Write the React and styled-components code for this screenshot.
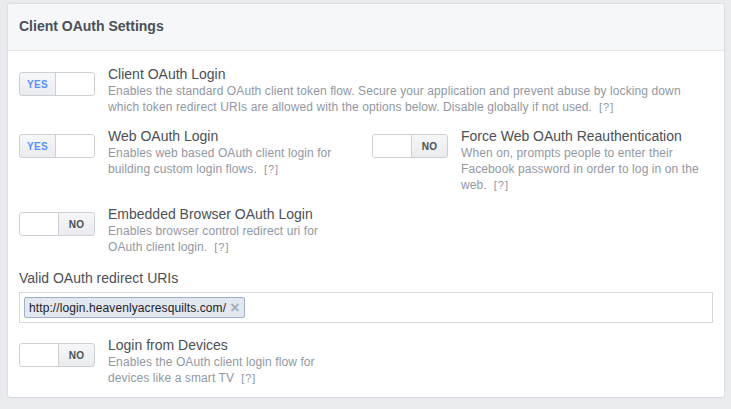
import React from "react";
import styled, { createGlobalStyle } from "styled-components";

const GlobalStyle = createGlobalStyle`
  html, body {
    margin: 0;
    background: #e9ebee;
  }
  body {
    padding: 3px 6px 0 7px;
    font-family: "Liberation Sans", Arial, Helvetica, sans-serif;
  }
`;

const Card = styled.section`
  background: #fff;
  border: 1px solid #dddfe2;
  border-bottom-color: #d3d6db;
  border-radius: 3px;
`;

const Header = styled.header`
  background: #f6f7f9;
  border-bottom: 1px solid #e5e5e5;
  border-radius: 3px 3px 0 0;
  padding: 13px 11px 15px;
`;

const Title = styled.h2`
  margin: 0;
  font-size: 14px;
  line-height: 18px;
  font-weight: bold;
  color: #4b4f56;
`;

const Body = styled.div`
  display: grid;
  grid-template-columns: 1fr 1fr;
  column-gap: 12px;
  row-gap: 12px;
  padding: 14px 11px 11px;
`;

const Row = styled.div`
  display: flex;
  align-items: flex-start;
  gap: 13px;
  grid-column: ${p => (p.$full ? "1 / span 2" : "auto")};
  margin-top: ${p => p.$offset || 0}px;
`;

const Text = styled.div`
  flex: 1;
  min-width: 0;
`;

const OptionTitle = styled.div`
  font-size: 14px;
  line-height: 18px;
  color: #4b4f56;
`;

const Description = styled.div`
  font-size: 12px;
  line-height: 16px;
  letter-spacing: 0.1px;
  color: #9197a3;
  max-width: ${p => (p.$wide ? "none" : "243px")};
`;

const Help = styled.span`
  display: inline-block;
  font-size: 11px;
  margin-left: 7px;
  letter-spacing: 1px;
`;

const Switch = styled.div`
  flex: none;
  display: flex;
  flex-direction: ${p => (p.$on ? "row" : "row-reverse")};
  width: 76px;
  height: 24px;
  margin-top: 7px;
  box-sizing: border-box;
  border: 1px solid #ccd0d5;
  border-radius: 3px;
  background: linear-gradient(#f6f7f9, #e9ebee);
  overflow: hidden;
`;

const SwitchLabel = styled.span`
  flex: 1;
  display: flex;
  align-items: center;
  justify-content: center;
  font-size: 10px;
  font-weight: bold;
  letter-spacing: 0.3px;
  color: ${p => (p.$on ? "#5890ff" : "#4b4f56")};
`;

const Knob = styled.span`
  width: 38px;
  background: #fff;
  border-left: ${p => (p.$on ? "1px solid #ccd0d5" : "none")};
  border-right: ${p => (p.$on ? "none" : "1px solid #ccd0d5")};
`;

const Field = styled.div`
  grid-column: 1 / span 2;
  margin-top: 2px;
`;

const FieldLabel = styled.div`
  font-size: 14px;
  line-height: 18px;
  color: #4b4f56;
  margin-bottom: 5px;
`;

const TokenInput = styled.div`
  display: flex;
  align-items: center;
  height: 31px;
  box-sizing: border-box;
  padding: 4px;
  border: 1px solid #d3d6db;
  background: #fff;
`;

const Token = styled.span`
  display: inline-flex;
  align-items: center;
  height: 21px;
  box-sizing: border-box;
  padding: 0 4px 0 4px;
  border: 1px solid #9fb0cc;
  border-radius: 2px;
  background: #e2e7f0;
  font-size: 12px;
  letter-spacing: 0.1px;
  color: #1d2129;
`;

const Remove = styled.span`
  margin-left: 4px;
  font-size: 16px;
  font-weight: bold;
  color: #a7acb5;
  line-height: 1;
`;

const Toggle = ({ on }) => (
  <Switch $on={on}>
    <SwitchLabel $on={on}>{on ? "YES" : "NO"}</SwitchLabel>
    <Knob $on={on} />
  </Switch>
);

const Option = ({ on, title, children, full, offset }) => (
  <Row $full={full} $offset={offset}>
    <Toggle on={on} />
    <Text>
      <OptionTitle>{title}</OptionTitle>
      <Description $wide={full}>
        {children}
        <Help>[?]</Help>
      </Description>
    </Text>
  </Row>
);

export default function App() {
  return (
    <>
      <GlobalStyle />
      <Card>
        <Header>
          <Title>Client OAuth Settings</Title>
        </Header>
        <Body>
          <Option on full title="Client OAuth Login">
            Enables the standard OAuth client token flow. Secure your
            application and prevent abuse by locking down which token redirect
            URIs are allowed with the options below. Disable globally if not
            used.
          </Option>
          <Option on title="Web OAuth Login">
            Enables web based OAuth client login for building custom login
            flows.
          </Option>
          <Option on={false} title="Force Web OAuth Reauthentication">
            When on, prompts people to enter their Facebook password in order
            to log in on the web.
          </Option>
          <Option on={false} title="Embedded Browser OAuth Login">
            Enables browser control redirect uri for OAuth client login.
          </Option>
          <div />
          <Field>
            <FieldLabel>Valid OAuth redirect URIs</FieldLabel>
            <TokenInput>
              <Token>
                http://login.heavenlyacresquilts.com/
                <Remove>×</Remove>
              </Token>
            </TokenInput>
          </Field>
          <Option on={false} title="Login from Devices" offset={1}>
            Enables the OAuth client login flow for devices like a smart TV
          </Option>
        </Body>
      </Card>
    </>
  );
}
